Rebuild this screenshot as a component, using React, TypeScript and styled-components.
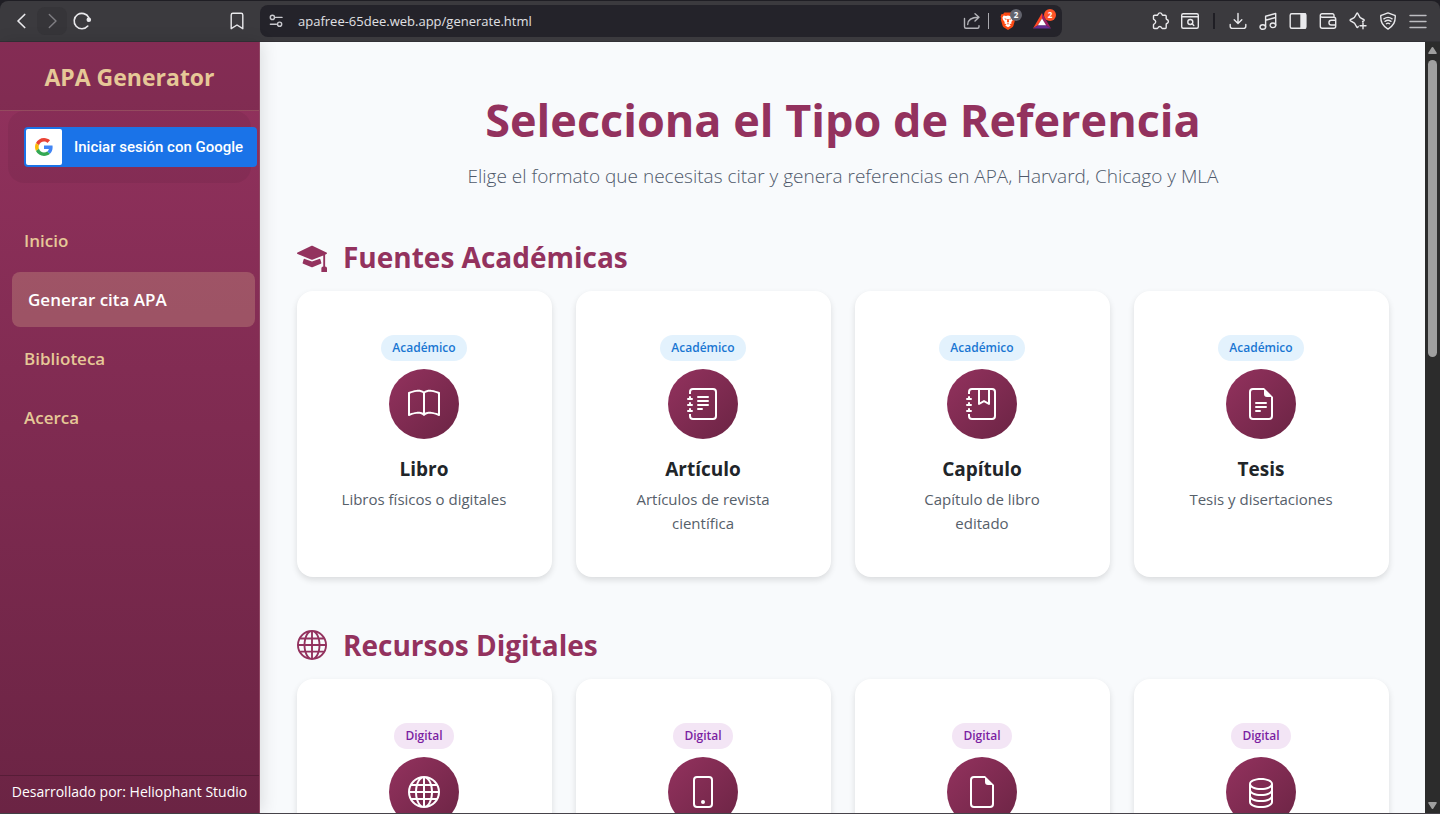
import React from "react";
import styled, { createGlobalStyle, css } from "styled-components";
import type { IconType } from "react-icons";
import {
  BsBook,
  BsDatabase,
  BsFileEarmark,
  BsFileEarmarkText,
  BsGlobe,
  BsJournalBookmark,
  BsJournalText,
  BsMortarboardFill,
  BsPhone,
} from "react-icons/bs";

const GlobalStyle = createGlobalStyle`
  *, *::before, *::after { box-sizing: border-box; }
  body { margin: 0; background: #3b3a3e; font-family: "Open Sans", "Noto Sans", sans-serif; }
  h1, h2, h3, p, ul { margin: 0; padding: 0; }
  ul { list-style: none; }
  button { font: inherit; border: 0; padding: 0; background: none; cursor: pointer; }
  a { text-decoration: none; }
  svg { display: block; flex: none; }
`;

const Window = styled.div`
  display: flex;
  flex-direction: column;
  height: 100vh;
  border-bottom: 1px solid #46434a;
  background: #1f1e24;
`;

const Toolbar = styled.header`
  display: flex;
  align-items: center;
  flex: none;
  height: 41px;
  margin-top: 1px;
  background: #3b3a3e;
  border-bottom: 1px solid #323136;
  border-radius: 8px 8px 0 0;
`;

const NavTools = styled.div`
  display: flex;
  justify-content: space-between;
  flex: none;
  width: 260px;
  padding: 0 8px 0 7px;
`;

const ToolGroup = styled.div`
  display: flex;
  align-items: center;
`;

const ToolButton = styled.button<{ $filled?: boolean; $muted?: boolean }>`
  display: flex;
  align-items: center;
  justify-content: center;
  width: 30px;
  height: 28px;
  border-radius: 8px;
  color: ${(p) => (p.$muted ? "#7f7e83" : "#e9e9ec")};
  background: ${(p) => (p.$filled ? "#363539" : "transparent")};
`;

const AddressBar = styled.div`
  display: flex;
  align-items: center;
  flex: 0 1 802px;
  min-width: 0;
  height: 32px;
  padding: 0 3px 0 6px;
  border-radius: 8px;
  background: #24232a;
`;

const SiteButton = styled(ToolButton)`
  width: 20px;
  margin-right: 12px;
  color: #c9c9ce;
`;

const ShareButton = styled(ToolButton)`
  color: #b4b4b9;
`;

const AddressInput = styled.input`
  flex: 1;
  min-width: 0;
  padding: 0;
  border: 0;
  outline: 0;
  background: none;
  color: #e0e0e4;
  font: 400 13px/20px "Open Sans", "Noto Sans", sans-serif;
`;

const Divider = styled.span<{ $dark?: boolean }>`
  width: ${(p) => (p.$dark ? 2 : 1)}px;
  height: 16px;
  margin: ${(p) => (p.$dark ? "0 8px" : "0 2px 0 1px")};
  background: ${(p) => (p.$dark ? "#1f1e24" : "#a9a9ae")};
`;

const ExtensionButton = styled(ToolButton)`
  position: relative;
  width: 34px;
`;

const Badge = styled.span<{ $color: string }>`
  position: absolute;
  top: 2px;
  right: 3px;
  width: 12px;
  height: 12px;
  border-radius: 6px;
  background: ${(p) => p.$color};
  color: #fff;
  font-size: 8px;
  font-weight: 700;
  line-height: 12px;
  text-align: center;
`;

const PageTools = styled(ToolGroup)`
  margin-left: auto;
  padding-right: 7px;
`;

const Viewport = styled.div`
  display: flex;
  flex: 1;
  min-height: 0;
`;

const Sidebar = styled.aside`
  position: relative;
  display: flex;
  flex-direction: column;
  flex: none;
  width: 260px;
  border-right: 1px solid #8f4663;
  background: linear-gradient(180deg, #93325e 0%, #6b2444 100%);
  box-shadow: 2px 0 16px rgba(0, 0, 0, 0.12);
`;

const Brand = styled.div`
  padding: 17px 16px 15px;
  border-bottom: 1px solid rgba(230, 200, 151, 0.2);
  background: rgba(0, 0, 0, 0.1);
  color: #e6c897;
  font-size: 23px;
  font-weight: 700;
  line-height: 36px;
  text-align: center;
`;

const LoginPanel = styled.div`
  margin: 0 8px;
  padding: 16px;
  border-radius: 16px;
  background: rgba(0, 0, 0, 0.05);
`;

const GoogleButton = styled.button`
  display: flex;
  align-items: center;
  width: 233px;
  height: 40px;
  padding: 2px;
  border-radius: 4px;
  background: #1a73e8;
  color: #fff;
  font-family: Roboto, sans-serif;
  font-size: 15px;
  font-weight: 500;
  white-space: nowrap;
`;

const GoogleMark = styled.span`
  display: flex;
  align-items: center;
  justify-content: center;
  width: 36px;
  height: 36px;
  margin-right: 12px;
  border-radius: 2px;
  background: #fff;
`;

const Menu = styled.nav`
  flex: 1;
  padding: 30px 4px 0 12px;

  ul {
    display: flex;
    flex-direction: column;
    gap: 4px;
  }
`;

const MenuLink = styled.a<{ $active?: boolean }>`
  display: block;
  padding: 14px 12px;
  border-radius: 8px;
  color: #e6c897;
  font-size: 17px;
  font-weight: 600;
  line-height: 27px;
  ${(p) =>
    p.$active &&
    css`
      padding-left: 16px;
      background: rgba(230, 200, 151, 0.25);
      color: #fff;
    `}
`;

const Credit = styled.footer`
  padding: 4px 0 9px;
  border-top: 1px solid rgba(0, 0, 0, 0.2);
  color: #fff;
  font-size: 14px;
  line-height: 24px;
  text-align: center;
  white-space: nowrap;
`;

const Content = styled.main`
  flex: 1;
  min-width: 0;
  overflow: hidden;
  padding: 46px 36px 0 37px;
  background: #f8fafc;
`;

const Hero = styled.div`
  margin-bottom: 46px;
  text-align: center;
`;

const Title = styled.h1`
  color: #93325e;
  font-size: 45px;
  font-weight: 700;
  line-height: 64px;
`;

const Lead = styled.p`
  margin-top: 9px;
  color: #4f596b;
  font-size: 19px;
  font-weight: 300;
  line-height: 30px;
`;

const Section = styled.section`
  margin-bottom: 48px;
`;

const SectionTitle = styled.h2`
  display: flex;
  align-items: center;
  gap: 16px;
  margin-bottom: 14px;
  color: #93325e;
  font-size: 28px;
  font-weight: 700;
  line-height: 40px;
`;

const CardGrid = styled.div`
  display: grid;
  grid-template-columns: repeat(4, 1fr);
  gap: 24px;
`;

const Card = styled.button`
  display: flex;
  flex-direction: column;
  align-items: center;
  min-height: 286px;
  padding: 44px 42px 40px 41px;
  border-radius: 16px;
  background: #fff;
  box-shadow: 0 3px 6px rgba(0, 0, 0, 0.12);
`;

const Tag = styled.span<{ $digital: boolean }>`
  padding: 0 11px;
  border-radius: 13px;
  background: ${(p) => (p.$digital ? "#f3e5f5" : "#e3f2fd")};
  color: ${(p) => (p.$digital ? "#7b1fa2" : "#1976d2")};
  font-size: 12px;
  font-weight: 600;
  line-height: 26px;
`;

const IconDisc = styled.span`
  display: flex;
  align-items: center;
  justify-content: center;
  width: 70px;
  height: 70px;
  margin: 8px 0 16px;
  border-radius: 50%;
  background: linear-gradient(135deg, #93325e 0%, #6b2444 100%);
  color: #fff;
`;

const CardTitle = styled.h3`
  color: #212529;
  font-size: 19px;
  font-weight: 700;
  line-height: 28px;
`;

const CardText = styled.p`
  margin-top: 4px;
  color: #56606a;
  font-size: 15px;
  line-height: 24px;
`;

const Scrollbar = styled.div`
  display: flex;
  flex-direction: column;
  align-items: center;
  flex: none;
  width: 15px;
  padding: 5px 0 4px;
  background: #2c2c2c;
`;

const ScrollThumb = styled.div`
  width: 9px;
  height: 39%;
  margin: 6px 0 auto;
  border-radius: 5px;
  background: #9f9f9f;
`;

const Line: React.FC<{ children: React.ReactNode; size?: number }> = ({ children, size = 20 }) => (
  <svg
    width={size}
    height={size}
    viewBox="0 0 20 20"
    fill="none"
    stroke="currentColor"
    strokeWidth="1.4"
    strokeLinecap="round"
    strokeLinejoin="round"
    aria-hidden="true"
  >
    {children}
  </svg>
);

const GoogleLogo = () => (
  <svg width="18" height="18" viewBox="0 0 48 48" aria-hidden="true">
    <path fill="#EA4335" d="M24 9.5c3.54 0 6.71 1.22 9.21 3.6l6.85-6.85C35.9 2.38 30.47 0 24 0 14.62 0 6.51 5.38 2.56 13.22l7.98 6.19C12.43 13.72 17.74 9.5 24 9.5z" />
    <path fill="#4285F4" d="M46.98 24.55c0-1.57-.15-3.09-.38-4.55H24v9.02h12.94c-.58 2.96-2.26 5.48-4.78 7.18l7.73 6c4.51-4.18 7.09-10.36 7.09-17.65z" />
    <path fill="#FBBC05" d="M10.53 28.59c-.48-1.45-.76-2.99-.76-4.59s.27-3.14.76-4.59l-7.98-6.19C.92 16.46 0 20.12 0 24c0 3.88.92 7.54 2.56 10.78l7.97-6.19z" />
    <path fill="#34A853" d="M24 48c6.48 0 11.93-2.13 15.89-5.81l-7.73-6c-2.15 1.45-4.92 2.3-8.16 2.3-6.26 0-11.57-4.22-13.47-9.91l-7.98 6.19C6.51 42.62 14.62 48 24 48z" />
  </svg>
);

const BraveLogo = () => (
  <svg width="18" height="18" viewBox="0 0 18 18" aria-hidden="true">
    <path fill="#fb4a14" d="M5.4.5h7.2l1.3 1.5 1.8.2.7 2.6-.5 1.4.3 1.4-1.8 6.2c-.2.8-.8 1.4-1.4 1.8L9 17.9l-4-2.3c-.7-.4-1.2-1-1.4-1.8L1.8 7.6l.3-1.4-.5-1.4.7-2.6L4.1 2z" />
    <path fill="#fff" d="M4.6 3.600 7 4l2-.5 2 .5 2.400-.4 1.200 2.200-.6 2-1.700 2.100.2 1.500-2 .9 1.300 1.200L9 15.200l-2.800-1.700 1.300-1.200-2-.9.2-1.500L4 7.800l-.6-2z" />
    <path fill="#fb4a14" d="m5.200 6.300 2.600.7-.8 1.100zM12.800 6.300l-2.600.7.8 1.100zM8.300 7h1.400l.4 2.800-1.100.9-1.100-.9zM7.600 11.700l1.400-.5 1.400.5-1.400.8z" />
  </svg>
);

const BatLogo = () => (
  <svg width="18" height="16" viewBox="0 0 18 16" aria-hidden="true">
    <path fill="#ff4724" d="M9 0v5.600L4.900 12.300 0 15.500z" />
    <path fill="#9e1f63" d="M9 0l9 15.500-5-3.200L9 5.600z" />
    <path fill="#662d91" d="M0 15.500l4.900-3.200H13l5 3.200z" />
    <path fill="#fff" d="M9 5.600l4.100 6.700H4.900z" />
  </svg>
);

const Arrow: React.FC<{ down?: boolean }> = ({ down }) => (
  <svg width="9" height="7" viewBox="0 0 9 7" aria-hidden="true">
    <path
      d={down ? "M1 .8h7L4.500 6.200z" : "M1 6.200h7L4.500.8z"}
      fill="#9f9f9f"
      stroke="#9f9f9f"
      strokeWidth="1.600"
      strokeLinejoin="round"
    />
  </svg>
);

const pageTools: { label: string; icon: React.ReactNode }[] = [
  {
    label: "Descargas",
    icon: <Line><path d="M10 2.500v9.800M6.200 8.800l3.800 3.700 3.800-3.700M2.200 13.500v1.800c0 1.200.9 2.100 2.100 2.100h11.400c1.200 0 2.100-.9 2.100-2.100v-1.800" /></Line>,
  },
  {
    label: "Música",
    icon: <Line><ellipse cx="4.800" cy="16" rx="2.800" ry="2.300" /><ellipse cx="14.900" cy="14.300" rx="2.800" ry="2.300" /><path d="M7.600 16V5.200l10.100-2.700v11.800M7.600 9.200l10.100-2.700" /></Line>,
  },
  {
    label: "Panel lateral",
    icon: <Line><rect x="2.200" y="2.700" width="15.600" height="14.600" rx="1.500" /><path d="M13 3h4.500v14H13z" fill="currentColor" /></Line>,
  },
  {
    label: "Cartera",
    icon: <Line><path d="M16 6.300V4.200c0-.8-.7-1.400-1.500-1.400H4A1.700 1.700 0 0 0 2.300 4.500v10.800c0 1 .8 1.900 1.900 1.900h11.600c1 0 1.900-.8 1.900-1.900V8.200c0-1-.8-1.900-1.900-1.900H4c-1 0-1.700-.7-1.700-1.700M17.700 9.300h-4.400a2.300 2.300 0 0 0 0 4.700h4.400z" /></Line>,
  },
  {
    label: "Asistente",
    icon: <Line><path d="M14.600 10.500c2.200-.9 2.200-1.700 0-2.500-2.700-1-3.500-2-4.400-4.700-.6-1.700-1.300-1.700-1.900 0C7.400 6 6.500 7 3.700 8c-2.200.8-2.200 1.600 0 2.500 2.800 1 3.700 2 4.600 4.700.6 1.700 1.300 1.700 1.900.2M15 11.800v6M12 14.800h6" /></Line>,
  },
  {
    label: "VPN",
    icon: <Line><path d="m10 1.900 6.700 2.400c.4.100.6.500.6.900-.1 5.700-1.400 9.300-7.300 12.900C4.100 14.500 2.800 10.900 2.700 5.200c0-.4.2-.8.6-.9zM5.900 7.800c2.500-1.700 5.700-1.700 8.200 0M7 10.300c1.900-1.300 4.100-1.300 6 0M8.400 12.700c1-.7 2.200-.7 3.200 0" /></Line>,
  },
];

type Source = { title: string; text: string; icon: IconType };

const sections: { title: string; tag: string; digital: boolean; icon: IconType; items: Source[] }[] = [
  {
    title: "Fuentes Académicas",
    tag: "Académico",
    digital: false,
    icon: BsMortarboardFill,
    items: [
      { title: "Libro", text: "Libros físicos o digitales", icon: BsBook },
      { title: "Artículo", text: "Artículos de revista científica", icon: BsJournalText },
      { title: "Capítulo", text: "Capítulo de libro editado", icon: BsJournalBookmark },
      { title: "Tesis", text: "Tesis y disertaciones", icon: BsFileEarmarkText },
    ],
  },
  {
    title: "Recursos Digitales",
    tag: "Digital",
    digital: true,
    icon: BsGlobe,
    items: [
      { title: "", text: "", icon: BsGlobe },
      { title: "", text: "", icon: BsPhone },
      { title: "", text: "", icon: BsFileEarmark },
      { title: "", text: "", icon: BsDatabase },
    ],
  },
];

const menu = ["Inicio", "Generar cita APA", "Biblioteca", "Acerca"];

const BrowserToolbar = () => (
  <Toolbar>
    <NavTools>
      <ToolGroup>
        <ToolButton aria-label="Atrás">
          <Line><path d="M12.700 3.500 6 10l6.700 6.500" strokeWidth="1.700" /></Line>
        </ToolButton>
        <ToolButton aria-label="Adelante" $filled $muted>
          <Line><path d="M7.300 3.500 14 10l-6.700 6.500" /></Line>
        </ToolButton>
        <ToolButton aria-label="Recargar">
          <Line>
            <path d="M15.800 15A7.700 7.700 0 1 1 16.800 6.700" strokeWidth="1.600" />
            <circle cx="16.800" cy="8.700" r="1.600" fill="currentColor" />
          </Line>
        </ToolButton>
      </ToolGroup>
      <ToolButton aria-label="Marcador">
        <Line><path d="M4.200 4c0-1 .7-1.700 1.700-1.700h8.200c1 0 1.700.7 1.700 1.700v13.700L10 14l-5.800 3.700z" /></Line>
      </ToolButton>
    </NavTools>
    <AddressBar>
      <SiteButton aria-label="Información del sitio">
        <Line size={16}>
          <circle cx="5.500" cy="5.500" r="2.600" strokeWidth="1.800" />
          <circle cx="14.500" cy="14" r="2.600" strokeWidth="1.800" />
          <path d="M9.500 5.500h8M3 14h7.500" strokeWidth="1.800" />
        </Line>
      </SiteButton>
      <AddressInput aria-label="Dirección" defaultValue="apafree-65dee.web.app/generate.html" />
      <ShareButton aria-label="Compartir">
        <Line>
          <path d="M2.500 7.500v8.300c0 .9.700 1.500 1.500 1.500h11.500c.8 0 1.500-.6 1.500-1.500v-1M5.700 13.500c.2-4.700 3.300-7.200 10.800-7.200M13 2.800l4 3.500-4 3.700" />
        </Line>
      </ShareButton>
      <Divider />
      <ExtensionButton aria-label="Brave Shields">
        <BraveLogo />
        <Badge $color="#62636d">2</Badge>
      </ExtensionButton>
      <ExtensionButton aria-label="Brave Rewards">
        <BatLogo />
        <Badge $color="#ff5328">2</Badge>
      </ExtensionButton>
    </AddressBar>
    <PageTools>
      <ToolButton aria-label="Extensiones">
        <Line>
          <path d="M4.500 4.300h2.800c.8 0 .4-2.400 2.700-2.400s1.900 2.400 2.700 2.400h2.500c.6 0 1 .4 1 1v2.500c0 .9 2.200.5 2.200 2.700s-2.200 1.800-2.200 2.700v3.300c0 .6-.4 1-1 1h-3c-.8 0-.4-2-2.400-2s-1.600 2-2.400 2H4.500c-.6 0-1-.4-1-1v-2.800c0-.8 2.200-.7 2.200-2.900S3.500 8.900 3.500 8V5.300c0-.6.4-1 1-1z" />
        </Line>
      </ToolButton>
      <ToolButton aria-label="Buscar pestañas">
        <Line>
          <rect x="1.700" y="2.700" width="16.600" height="14.600" rx="1.500" />
          <path d="M2 5.800h16M12.100 12.800l1.700 1.700" />
          <circle cx="10.300" cy="11" r="2.500" />
        </Line>
      </ToolButton>
      <Divider $dark />
      {pageTools.map((tool) => (
        <ToolButton key={tool.label} aria-label={tool.label}>
          {tool.icon}
        </ToolButton>
      ))}
      <ToolButton aria-label="Menú">
        <Line><path d="M2 4.500h16M2 10.500h16M2 16.500h16" stroke="#bdbdc1" /></Line>
      </ToolButton>
    </PageTools>
  </Toolbar>
);

export default function App() {
  return (
    <>
      <GlobalStyle />
      <Window>
        <BrowserToolbar />
        <Viewport>
          <Sidebar>
            <Brand>APA Generator</Brand>
            <LoginPanel>
              <GoogleButton>
                <GoogleMark>
                  <GoogleLogo />
                </GoogleMark>
                Iniciar sesión con Google
              </GoogleButton>
            </LoginPanel>
            <Menu>
              <ul>
                {menu.map((label) => (
                  <li key={label}>
                    <MenuLink href="#" $active={label === "Generar cita APA"}>
                      {label}
                    </MenuLink>
                  </li>
                ))}
              </ul>
            </Menu>
            <Credit>Desarrollado por: Heliophant Studio</Credit>
          </Sidebar>
          <Content>
            <Hero>
              <Title>Selecciona el Tipo de Referencia</Title>
              <Lead>Elige el formato que necesitas citar y genera referencias en APA, Harvard, Chicago y MLA</Lead>
            </Hero>
            {sections.map(({ title, tag, digital, icon: SectionIcon, items }) => (
              <Section key={title}>
                <SectionTitle>
                  <SectionIcon size={30} />
                  {title}
                </SectionTitle>
                <CardGrid>
                  {items.map(({ title: name, text, icon: Icon }, index) => (
                    <Card key={index}>
                      <Tag $digital={digital}>{tag}</Tag>
                      <IconDisc>
                        <Icon size={32} />
                      </IconDisc>
                      {name && <CardTitle>{name}</CardTitle>}
                      {text && <CardText>{text}</CardText>}
                    </Card>
                  ))}
                </CardGrid>
              </Section>
            ))}
          </Content>
          <Scrollbar aria-hidden="true">
            <Arrow />
            <ScrollThumb />
            <Arrow down />
          </Scrollbar>
        </Viewport>
      </Window>
    </>
  );
}
